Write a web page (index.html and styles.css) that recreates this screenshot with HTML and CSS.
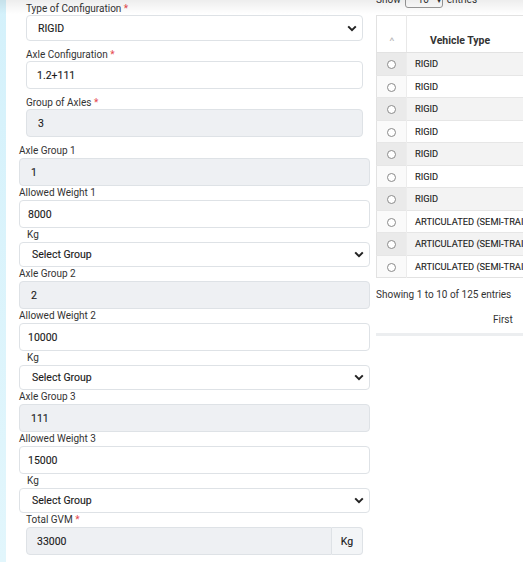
FILE: index.html
```html
<!DOCTYPE html>
<html>
<head>
<meta charset="utf-8">
<link rel="stylesheet" href="styles.css">
</head>
<body>
<div class="shade"></div>
<div class="page">
  <div class="strip"></div>
  <div class="main">
    <div class="form">
      <div class="indent top">
        <div class="group">
          <div class="label">Type of Configuration <span class="req">*</span></div>
          <div class="select"><span>RIGID</span><svg class="chev" width="10" height="7" viewBox="0 0 10 7"><path d="M1.2 1.4 L5 5.2 L8.8 1.4" fill="none" stroke="#222" stroke-width="2"/></svg></div>
        </div>
        <div class="group">
          <div class="label">Axle Configuration <span class="req">*</span></div>
          <div class="input pad10">1.2+111</div>
        </div>
        <div class="group">
          <div class="label">Group of Axles <span class="req">*</span></div>
          <div class="input disabled pad11">3</div>
        </div>
      </div>

      <div class="wide first">
        <div class="label w">Axle Group 1</div>
        <div class="input disabled pad11">1</div>
        <div class="label w">Allowed Weight 1</div>
        <div class="input pad8">8000</div>
        <div class="label w kg">Kg</div>
        <div class="select sm"><span>Select Group</span><svg class="chev" width="10" height="7" viewBox="0 0 10 7"><path d="M1.2 1.4 L5 5.2 L8.8 1.4" fill="none" stroke="#222" stroke-width="2"/></svg></div>

        <div class="label w">Axle Group 2</div>
        <div class="input disabled pad11">2</div>
        <div class="label w">Allowed Weight 2</div>
        <div class="input pad8">10000</div>
        <div class="label w kg">Kg</div>
        <div class="select sm"><span>Select Group</span><svg class="chev" width="10" height="7" viewBox="0 0 10 7"><path d="M1.2 1.4 L5 5.2 L8.8 1.4" fill="none" stroke="#222" stroke-width="2"/></svg></div>

        <div class="label w">Axle Group 3</div>
        <div class="input disabled pad11">111</div>
        <div class="label w">Allowed Weight 3</div>
        <div class="input pad8">15000</div>
        <div class="label w kg">Kg</div>
        <div class="select sm"><span>Select Group</span><svg class="chev" width="10" height="7" viewBox="0 0 10 7"><path d="M1.2 1.4 L5 5.2 L8.8 1.4" fill="none" stroke="#222" stroke-width="2"/></svg></div>
      </div>

      <div class="indent">
        <div class="label w">Total GVM <span class="req">*</span></div>
        <div class="igroup">
          <div class="input disabled pad10 grow">33000</div>
          <div class="addon">Kg</div>
        </div>
      </div>
    </div>

    <div class="tablecol">
      <div class="show">Show <span class="len">10 <span class="caret">▾</span></span> entries</div>
      <div class="tablewrap">
        <table>
          <thead>
            <tr><th class="c1"><span class="sort">^</span></th><th class="c2">Vehicle Type</th></tr>
          </thead>
          <tbody>
            <tr class="odd"><td class="c1"><span class="radio"></span></td><td>RIGID</td></tr>
            <tr class="even"><td class="c1"><span class="radio"></span></td><td>RIGID</td></tr>
            <tr class="odd"><td class="c1"><span class="radio"></span></td><td>RIGID</td></tr>
            <tr class="even"><td class="c1"><span class="radio"></span></td><td>RIGID</td></tr>
            <tr class="odd"><td class="c1"><span class="radio"></span></td><td>RIGID</td></tr>
            <tr class="even"><td class="c1"><span class="radio"></span></td><td>RIGID</td></tr>
            <tr class="odd"><td class="c1"><span class="radio"></span></td><td>RIGID</td></tr>
            <tr class="even"><td class="c1"><span class="radio"></span></td><td>ARTICULATED (SEMI-TRAILER)</td></tr>
            <tr class="odd"><td class="c1"><span class="radio"></span></td><td>ARTICULATED (SEMI-TRAILER)</td></tr>
            <tr class="even"><td class="c1"><span class="radio"></span></td><td>ARTICULATED (SEMI-TRAILER)</td></tr>
          </tbody>
        </table>
      </div>
      <div class="info">Showing 1 to 10 of 125 entries</div>
      <div class="paging"><span class="first">First</span></div>
      <div class="bar"></div>
    </div>
  </div>
</div>
</body>
</html>
```

FILE: styles.css
```css
html, body {
  margin: 0;
  padding: 0;
  background: #fff;
  overflow: hidden;
}
body {
  font-family: Roboto, "Liberation Sans", sans-serif;
  color: #222;
  width: 523px;
  height: 562px;
  position: relative;
}
.shade {
  position: absolute;
  left: 0;
  top: 0;
  width: 523px;
  height: 14px;
  background: linear-gradient(to bottom, rgba(0,0,0,0.07), rgba(0,0,0,0));
  z-index: 5;
  pointer-events: none;
}
.page {
  display: flex;
  height: 562px;
}
.strip {
  width: 6px;
  flex: none;
  background: linear-gradient(to bottom, #d4f1fb, #e2f6fc);
}
.main {
  flex: 1;
  display: flex;
  padding-left: 13px;
  gap: 6px;
  min-width: 0;
}
.form {
  width: 351px;
  flex: none;
}
.indent {
  padding: 0 7px;
}
.top {
  padding-top: 2px;
}
.group {
  margin-bottom: 7px;
}
.wide.first {
  margin-top: 1px;
}
.label {
  font-size: 10px;
  line-height: 13px;
  height: 13px;
  color: #333;
  white-space: nowrap;
}
.label.w {
  height: 14px;
}
.label.kg {
  padding-left: 8px;
}
.req {
  color: #e5484d;
}
.input, .select {
  box-sizing: border-box;
  border: 1px solid #dee2e6;
  border-radius: 4px;
  background: #fff;
  font-size: 10.5px;
  font-weight: 400;
  -webkit-text-stroke: 0.12px #1a1a1a;
  color: #1a1a1a;
  display: flex;
  align-items: center;
}
.input {
  height: 28px;
}
.select {
  height: 26px;
  padding-left: 11px;
  padding-right: 5px;
  justify-content: space-between;
}
.select.sm {
  height: 25px;
  padding-left: 12px;
}
.disabled {
  background: #eef0f3;
}
.pad8 { padding-left: 8px; }
.pad10 { padding-left: 10px; }
.pad11 { padding-left: 11px; }
.igroup {
  display: flex;
  height: 28px;
}
.igroup .grow {
  flex: 1;
  border-radius: 4px 0 0 4px;
}
.addon {
  box-sizing: border-box;
  width: 31px;
  border: 1px solid #dee2e6;
  border-left: none;
  border-radius: 0 4px 4px 0;
  background: #f3f5f7;
  font-size: 10.5px;
  -webkit-text-stroke: 0.12px #1a1a1a;
  color: #1a1a1a;
  display: flex;
  align-items: center;
  justify-content: center;
}

.tablecol {
  flex: 1;
  min-width: 0;
  overflow: hidden;
}
.show {
  font-size: 10px;
  color: #333;
  height: 15px;
  margin-top: -8px;
  display: flex;
  align-items: center;
  white-space: nowrap;
}
.len {
  display: inline-block;
  box-sizing: border-box;
  width: 38px;
  height: 16px;
  border: 1px solid #999;
  border-radius: 3px;
  margin: 0 4px;
  padding-left: 12px;
  line-height: 14px;
  font-size: 10px;
}
.caret {
  font-size: 8px;
  margin-left: 6px;
}
.tablewrap {
  margin-top: 8px;
  width: 200px;
}
table {
  border-collapse: collapse;
  width: 200px;
  border: 1px solid #e2e2e2;
  table-layout: fixed;
}
th, td {
  white-space: nowrap;
  overflow: hidden;
}
th {
  height: 31px;
  vertical-align: bottom;
  font-size: 10.5px;
  font-weight: 700;
  color: #333;
  text-align: left;
  padding: 0 0 5px 0;
  border-bottom: 1px solid #e2e2e2;
}
th.c1 {
  width: 29px;
  border-right: 1px solid #e8e8e8;
  text-align: center;
}
th.c2 {
  padding-left: 23px;
}
.sort {
  color: #bbb;
  font-size: 9px;
  font-weight: 400;
  display: inline-block;
  transform: scaleX(1.4);
}
td {
  height: 22.5px;
  box-sizing: border-box;
  font-size: 9.3px;
  font-weight: 400;
  -webkit-text-stroke: 0.1px #222;
  color: #222;
  padding: 0 0 0 8px;
  border-top: 1px solid #e6e6e6;
}
td.c1 {
  padding: 0;
  text-align: center;
  border-right: 1px solid #ececec;
  -webkit-text-stroke: 0;
}
tr.odd td { background: #f3f3f3; }
tr.odd td.c1 { background: #eaeaea; }
tr.even td { background: #fff; }
tr.even td.c1 { background: #fafafa; }
.radio {
  display: inline-block;
  box-sizing: border-box;
  width: 9px;
  height: 9px;
  border: 1px solid #8a8a8a;
  border-radius: 50%;
  background: #fff;
  vertical-align: middle;
}
.info {
  font-size: 10px;
  color: #333;
  margin-top: 10px;
  height: 14px;
  line-height: 14px;
}
.paging {
  height: 14px;
  line-height: 14px;
  margin-top: 11px;
  font-size: 10px;
  color: #333;
  padding-left: 117px;
}
.bar {
  margin-top: 6px;
  height: 3px;
  background: #eceef0;
}
```
